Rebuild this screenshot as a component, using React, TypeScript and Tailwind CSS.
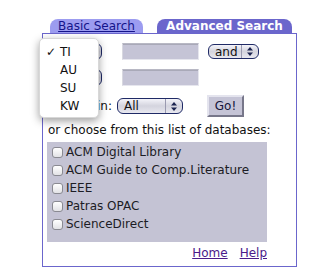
import React from "react";

function Arrows() {
  return (
    <svg width="6" height="9" viewBox="0 0 6 9" className="block">
      <path d="M3 0 L6 3.5 L0 3.5 Z" fill="#1c2450" />
      <path d="M3 9 L6 5.5 L0 5.5 Z" fill="#1c2450" />
    </svg>
  );
}

function Select({ label, w, h }: { label: string; w: string; h: string }) {
  return (
    <div
      className={`${w} ${h} flex items-center rounded-[6px] border border-[#1f2a66] bg-gradient-to-b from-[#f4f4fa] via-[#d4d4de] to-[#e8e8f0] text-[12px] text-[#111]`}
    >
      <span className="flex-1 pl-[6px] leading-none">{label}</span>
      <span className="h-full w-px bg-[#9a9ab0]" />
      <span className="w-[16px] flex justify-center">
        <Arrows />
      </span>
    </div>
  );
}

function Input() {
  return (
    <div className="w-[77px] h-[17px] bg-[#c5c4d6] border border-[#e6e6ee] border-t-[#b8b8c4] border-l-[#d8d8e0] shadow-[inset_0_1px_0_#a9a9b8]" />
  );
}

function Check({ label }: { label: string }) {
  return (
    <div className="h-[18px] flex items-center">
      <span className="w-[11px] h-[11px] rounded-[3px] border border-[#8a8a92] bg-gradient-to-b from-[#ffffff] to-[#e2e2e6]" />
      <span className="ml-[3px] text-[12px] text-[#1c1c24]">{label}</span>
    </div>
  );
}

export default function App() {
  return (
    <div className="w-[319px] h-[280px] bg-white relative font-['DejaVu_Sans','Verdana',sans-serif] overflow-hidden">
      <div className="pt-[19px] pl-[42px]">
        {/* Tabs */}
        <div className="flex h-[14px]">
          <div className="ml-[8px] w-[93px] h-[14px] rounded-t-[8px] bg-[#9c9cf0] flex items-center justify-center">
            <span className="text-[12px] leading-none text-[#14148a] underline">Basic Search</span>
          </div>
          <div className="ml-[14px] w-[135px] h-[14px] rounded-t-[8px] bg-[#6b66cc] flex items-center justify-center">
            <span className="text-[12px] leading-none font-bold text-white">Advanced Search</span>
          </div>
        </div>
        {/* Box */}
        <div className="w-[255px] h-[234px] border border-[#6b66cc] pt-[9px]">
          <div className="flex items-center h-[17px]">
            <div className="ml-[7px]">
              <Select label="" w="w-[52px]" h="h-[17px]" />
            </div>
            <div className="ml-[20px]">
              <Input />
            </div>
            <div className="ml-[9px]">
              <Select label="and" w="w-[51px]" h="h-[15px]" />
            </div>
          </div>
          <div className="flex items-center h-[17px] mt-[9px]">
            <div className="ml-[7px]">
              <Select label="" w="w-[52px]" h="h-[17px]" />
            </div>
            <div className="ml-[20px]">
              <Input />
            </div>
          </div>
          <div className="flex items-center h-[22px] mt-[9px]">
            <div className="w-[69px] text-right text-[12px] text-[#111]">Search in:</div>
            <div className="ml-[5px]">
              <Select label="All" w="w-[66px]" h="h-[16px]" />
            </div>
            <button className="ml-[24px] w-[37px] h-[22px] bg-[#c5c4d6] border-2 border-t-[#e4e4ee] border-l-[#e4e4ee] border-r-[#77778a] border-b-[#77778a] text-[12px] text-[#14143a] flex items-center justify-center">
              Go!
            </button>
          </div>
          <div className="mt-[6px] pl-[5px] h-[14px] leading-[14px] text-[12px] text-[#111] whitespace-nowrap">
            or choose from this list of databases:
          </div>
          <div className="mt-[5px] ml-[4px] w-[220px] h-[100px] bg-[#c4c3d4] pt-px pl-[5px]">
            <Check label="ACM Digital Library" />
            <Check label="ACM Guide to Comp.Literature" />
            <Check label="IEEE" />
            <Check label="Patras OPAC" />
            <Check label="ScienceDirect" />
          </div>
          <div className="mt-[4px] h-[14px] flex justify-end pr-[29px] gap-[12px] text-[12px] leading-[14px]">
            <a className="text-[#4a1a8a] underline">Home</a>
            <a className="text-[#4a1a8a] underline">Help</a>
          </div>
        </div>
      </div>

      {/* Open dropdown menu overlay */}
      <div className="absolute left-[39px] top-[38px] w-[60px] h-[80px] bg-white rounded-[5px] shadow-[0_3px_9px_rgba(0,0,0,0.38)] border border-[#d8d8d8] pt-[4px]">
        {["TI", "AU", "SU", "KW"].map((t, i) => (
          <div key={t} className="h-[18px] flex items-center text-[12px] text-[#111]">
            <span className="w-[20px] pl-[6px] text-[12px]">{i === 0 ? "✓" : ""}</span>
            <span>{t}</span>
          </div>
        ))}
      </div>
    </div>
  );
}
